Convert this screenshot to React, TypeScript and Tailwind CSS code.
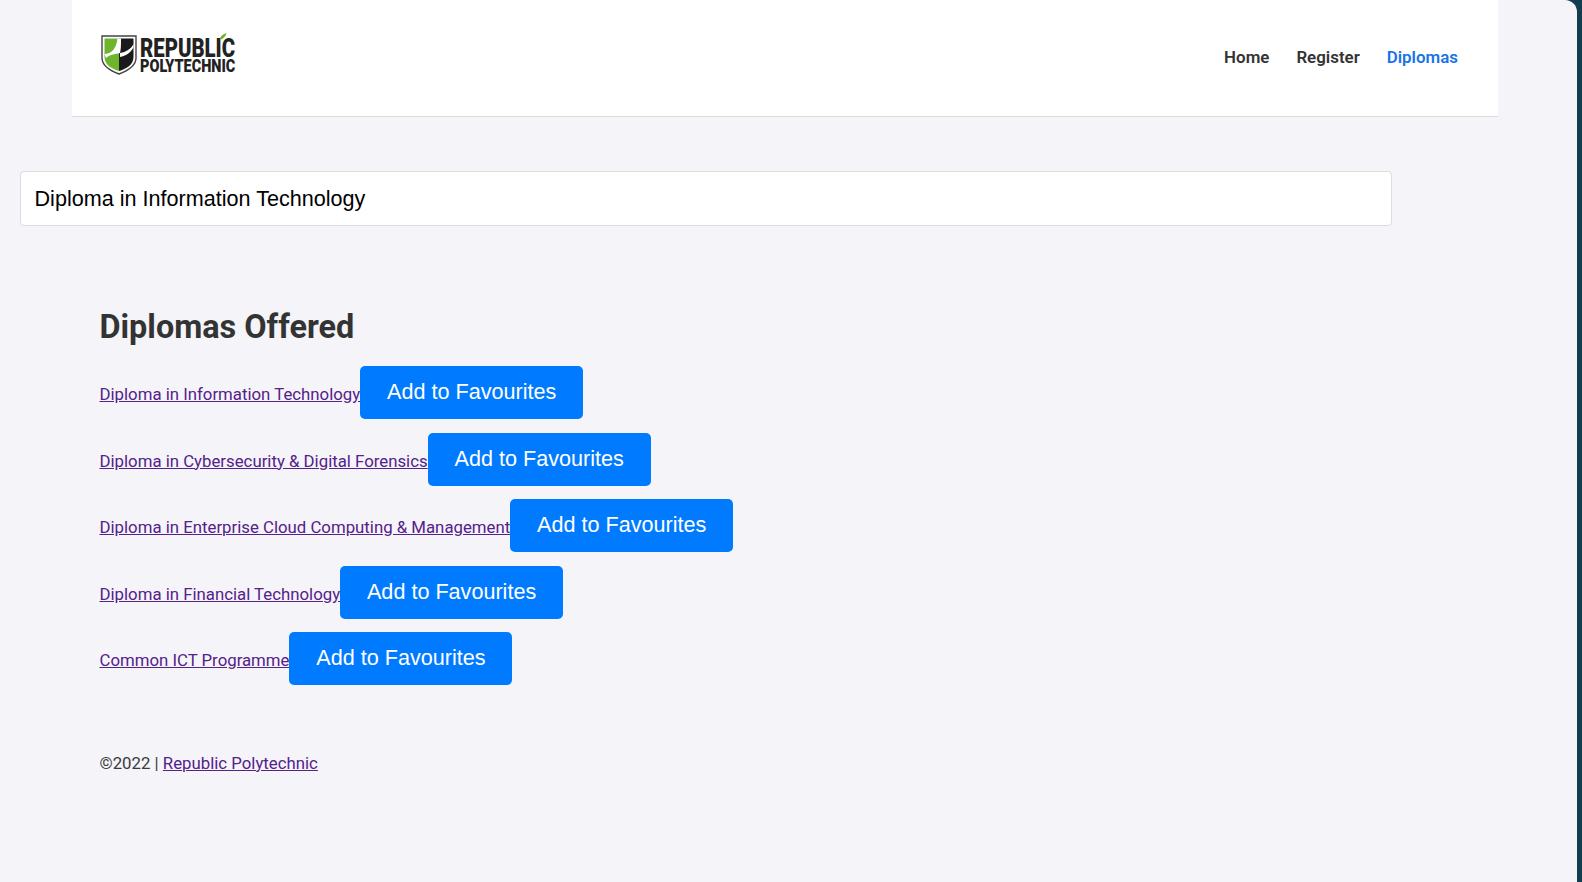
const diplomas = [
  "Diploma in Information Technology",
  "Diploma in Cybersecurity & Digital Forensics",
  "Diploma in Enterprise Cloud Computing & Management",
  "Diploma in Financial Technology",
  "Common ICT Programme",
];

function Logo() {
  return (
    <div className="-mt-[6px] flex items-center gap-[3px]">
      <svg width="36" height="40" viewBox="0 0 36 40" aria-hidden>
        <path d="M1 1H35V23C35 31 26 36 18 39C10 36 1 31 1 23Z" fill="#fff" stroke="#444" strokeWidth="1.4" />
        <path d="M3.5 3.5H18V36C11 34 3.5 30 3.5 22Z" fill="#6db52d" />
        <path d="M18 3.5H32.5V22C32.5 30 25 34 18 36Z" fill="#1a1a1a" />
        <path d="M3.5 19C10 18.5 15 15 16.5 3.5H20C20 10 20 14 19 18C14 19 8 20 5 23Z" fill="#fff" />
        <path d="M19 18C25 17 30 14 32.5 9V12.5C29 18 25 21 19 22Z" fill="#fff" />
      </svg>
      <div className="relative flex origin-left scale-x-[0.795] flex-col font-['Roboto',sans-serif] font-black uppercase text-[#222]">
        <span className="h-[20px] text-[25.6px] leading-[20px] whitespace-nowrap">Republic</span>
        <span className="h-[15px] text-[18.2px] leading-[15px] whitespace-nowrap">Polytechnic</span>
        <svg className="absolute top-[-5px] left-[100px]" width="9" height="7" viewBox="0 0 9 7" aria-hidden>
          <path d="M0 7C1 3 4 1 9 0C8 3 5 6 0 7Z" fill="#6db52d" />
        </svg>
      </div>
    </div>
  );
}

export default function App() {
  return (
    <div className="flex min-h-[882px] bg-[#143d4f] font-['Roboto',sans-serif]">
      <div className="w-[1577px] shrink-0 rounded-tr-[12px] bg-[#f4f4f9]">
        <header className="ml-[72px] flex h-[117px] w-[1426px] items-center justify-between border-b border-[#dcdcdf] bg-white pr-[40px] pl-[29px]">
          <Logo />
          <nav className="-mt-[1px] flex gap-[27px] text-[16.9px] font-semibold text-[#333]">
            <a>Home</a>
            <a>Register</a>
            <a className="text-[#1a73e8]">Diplomas</a>
          </nav>
        </header>

        <div className="mt-[54px] ml-[20px] flex h-[55px] w-[1372px] items-center rounded-[4px] border border-[#dddde0] bg-white pt-[1px] pl-[13.5px] font-['Liberation_Sans',sans-serif] text-[21.6px] text-black">
          Diploma in Information Technology
        </div>

        <main className="mt-[79px] ml-[99.5px]">
          <h1 className="text-[32.4px] leading-[44px] font-bold text-[#333]">Diplomas Offered</h1>
          <ul className="mt-[17px]">
            {diplomas.map((d) => (
              <li key={d} className="mb-[13.5px] flex h-[53px] items-end">
                <a href="#" className="mb-[15px] text-[16.8px] leading-[20px] whitespace-nowrap text-[#55218a] underline">
                  {d}
                </a>
                <button className="h-[53px] w-[223px] rounded-[5px] bg-[#007bff] font-['Liberation_Sans',sans-serif] text-[21.6px] text-white">
                  Add to Favourites
                </button>
              </li>
            ))}
          </ul>
          <p className="mt-[68px] text-[16.8px] leading-[20px] text-[#3a3a3a]">
            ©2022 |{" "}
            <a href="#" className="text-[#55218a] underline">
              Republic Polytechnic
            </a>
          </p>
        </main>
      </div>
    </div>
  );
}
